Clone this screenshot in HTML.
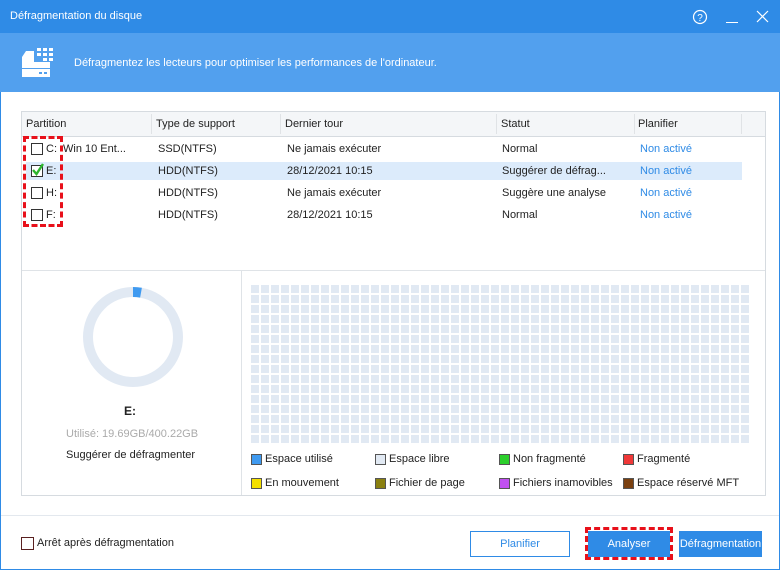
<!DOCTYPE html>
<html><head><meta charset="utf-8"><style>
*{margin:0;padding:0;box-sizing:border-box}
body{width:780px;height:570px;overflow:hidden;background:#fff;font-family:"Liberation Sans",sans-serif;font-size:11px;color:#222;position:relative}
.abs{position:absolute}
.win{position:absolute;left:0;top:0;width:780px;height:570px;border:1px solid #2f8be6;border-top:none}
.title{left:0;top:0;width:780px;height:33px;background:#2f8be6;color:#fff}
.band{left:0;top:33px;width:780px;height:59px;background:#52a0ee;color:#fff}
.tbl{left:21px;top:111px;width:745px;height:385px;border:1px solid #d6dbe0}
.hdr{left:22px;top:112px;width:743px;height:25px;background:#f4f6f8;border-bottom:1px solid #d6dbe0}
.cb{width:12px;height:12px;border:1px solid #333;background:#fff}
.link{color:#2f8be6}
.lg{width:11px;height:11px;border:1px solid #555}
.btn{height:26px;text-align:center;line-height:26px;font-size:11px}
</style></head><body>
<div class="win"></div>
<div class="abs title"><span class="abs" style="left:10px;top:10px">Défragmentation du disque</span>
<svg class="abs" style="left:692px;top:9px" width="16" height="16"><circle cx="8" cy="8" r="6.5" fill="none" stroke="#fff" stroke-width="1.2"/><text x="8" y="12" font-size="10" fill="#fff" text-anchor="middle" font-family="Liberation Sans">?</text></svg>
<div class="abs" style="left:726px;top:22px;width:12px;height:1px;background:#fff"></div>
<svg class="abs" style="left:756px;top:10px" width="13" height="13"><path d="M1 1L12 12M12 1L1 12" stroke="#fff" stroke-width="1.2"/></svg>
</div>
<div class="abs band">
<svg class="abs" style="left:21px;top:14px" width="34" height="32" fill="#fff">
<rect x="16" y="1" width="4" height="3"/><rect x="22" y="1" width="4" height="3"/><rect x="28" y="1" width="4" height="3"/>
<rect x="16" y="6" width="4" height="3"/><rect x="22" y="6" width="4" height="3"/><rect x="28" y="6" width="4" height="3"/>
<rect x="22" y="11" width="4" height="3"/><rect x="28" y="11" width="4" height="3"/>
<path d="M5 4H13V15H29V21H1V10Z"/><rect x="1" y="22" width="28" height="8"/><rect x="18" y="25" width="3" height="2" fill="#52a0ee"/><rect x="23" y="25" width="3" height="2" fill="#52a0ee"/>
</svg>
<span class="abs" style="left:74px;top:24px">Défragmentez les lecteurs pour optimiser les performances de l'ordinateur.</span></div>

<div class="abs tbl"></div>
<div class="abs hdr">
<span class="abs" style="left:4px;top:6px">Partition</span>
<span class="abs" style="left:134px;top:6px">Type de support</span>
<span class="abs" style="left:263px;top:6px">Dernier tour</span>
<span class="abs" style="left:479px;top:6px">Statut</span>
<span class="abs" style="left:616px;top:6px">Planifier</span>
<div class="abs" style="left:129px;top:2px;width:1px;height:20px;background:#e0e3e6"></div>
<div class="abs" style="left:258px;top:2px;width:1px;height:20px;background:#e0e3e6"></div>
<div class="abs" style="left:474px;top:2px;width:1px;height:20px;background:#e0e3e6"></div>
<div class="abs" style="left:612px;top:2px;width:1px;height:20px;background:#e0e3e6"></div>
<div class="abs" style="left:719px;top:2px;width:1px;height:20px;background:#e0e3e6"></div>
</div>
<div class="abs" style="left:26px;top:162px;width:716px;height:18px;background:#dcebfb"></div>
<div class="abs cb" style="left:31px;top:143px"></div><span class="abs" style="left:46px;top:143px">C:</span><span class="abs" style="left:63px;top:143px">Win 10 Ent...</span>
<div class="abs cb" style="left:31px;top:165px"></div><svg class="abs" style="left:31px;top:162px" width="14" height="14"><path d="M2 8L5.5 12L12 2" stroke="#2db52d" stroke-width="2.4" fill="none"/></svg><span class="abs" style="left:46px;top:165px">E:</span>
<div class="abs cb" style="left:31px;top:187px"></div><span class="abs" style="left:46px;top:187px">H:</span>
<div class="abs cb" style="left:31px;top:209px"></div><span class="abs" style="left:46px;top:209px">F:</span>
<span class="abs" style="left:158px;top:143px">SSD(NTFS)</span><span class="abs" style="left:287px;top:143px">Ne jamais exécuter</span><span class="abs" style="left:502px;top:143px">Normal</span><span class="abs link" style="left:640px;top:143px">Non activé</span>
<span class="abs" style="left:158px;top:165px">HDD(NTFS)</span><span class="abs" style="left:287px;top:165px">28/12/2021 10:15</span><span class="abs" style="left:502px;top:165px">Suggérer de défrag...</span><span class="abs link" style="left:640px;top:165px">Non activé</span>
<span class="abs" style="left:158px;top:187px">HDD(NTFS)</span><span class="abs" style="left:287px;top:187px">Ne jamais exécuter</span><span class="abs" style="left:502px;top:187px">Suggère une analyse</span><span class="abs link" style="left:640px;top:187px">Non activé</span>
<span class="abs" style="left:158px;top:209px">HDD(NTFS)</span><span class="abs" style="left:287px;top:209px">28/12/2021 10:15</span><span class="abs" style="left:502px;top:209px">Normal</span><span class="abs link" style="left:640px;top:209px">Non activé</span>
<div class="abs" style="left:23px;top:136px;width:40px;height:91px;border:3px dashed #e8101a"></div>

<div class="abs" style="left:22px;top:270px;width:743px;height:1px;background:#dfe3e7"></div>
<div class="abs" style="left:241px;top:270px;width:1px;height:225px;background:#dfe3e7"></div>
<svg class="abs" style="left:82px;top:286px" width="102" height="102"><circle cx="51" cy="51" r="45" fill="none" stroke="#e1e9f3" stroke-width="10"/><path d="M51 6A45 45 0 0 1 59 6.7" stroke="#3f9af0" stroke-width="10" fill="none"/></svg>
<span class="abs" style="left:124px;top:404px;font-weight:bold;font-size:12px">E:</span>
<span class="abs" style="left:66px;top:428px;color:#aaa">Utilisé: 19.69GB/400.22GB</span>
<span class="abs" style="left:66px;top:449px">Suggérer de défragmenter</span>
<div class="abs" style="left:251px;top:285px;width:500px;height:158px;background:repeating-linear-gradient(90deg,transparent 0 8px,#fff 8px 10px),repeating-linear-gradient(180deg,#e1e9f3 0 8px,#fff 8px 10px)"></div>
<div class="abs lg" style="left:251px;top:454px;background:#3f9af0"></div><span class="abs" style="left:265px;top:453px">Espace utilisé</span>
<div class="abs lg" style="left:375px;top:454px;background:#e1e9f3"></div><span class="abs" style="left:389px;top:453px">Espace libre</span>
<div class="abs lg" style="left:499px;top:454px;background:#2ccf2c"></div><span class="abs" style="left:513px;top:453px">Non fragmenté</span>
<div class="abs lg" style="left:623px;top:454px;background:#f03838"></div><span class="abs" style="left:637px;top:453px">Fragmenté</span>
<div class="abs lg" style="left:251px;top:478px;background:#f5e000"></div><span class="abs" style="left:265px;top:477px">En mouvement</span>
<div class="abs lg" style="left:375px;top:478px;background:#8a8010"></div><span class="abs" style="left:389px;top:477px">Fichier de page</span>
<div class="abs lg" style="left:499px;top:478px;background:#c050f0"></div><span class="abs" style="left:513px;top:477px">Fichiers inamovibles</span>
<div class="abs lg" style="left:623px;top:478px;background:#7a4010"></div><span class="abs" style="left:637px;top:477px">Espace réservé MFT</span>

<div class="abs" style="left:1px;top:515px;width:778px;height:1px;background:#e3e8ee"></div>
<div class="abs" style="left:21px;top:537px;width:13px;height:13px;border:1px solid #5a2020"></div>
<span class="abs" style="left:37px;top:537px">Arrêt après défragmentation</span>
<div class="abs btn" style="left:470px;top:531px;width:100px;border:1px solid #2f8be6;color:#2f8be6;line-height:24px">Planifier</div>
<div class="abs btn" style="left:588px;top:531px;width:82px;background:#2f8be6;color:#fff">Analyser</div>
<div class="abs" style="left:585px;top:527px;width:88px;height:33px;border:3px dashed #e8101a"></div>
<div class="abs btn" style="left:679px;top:531px;width:83px;background:#2f8be6;color:#fff;white-space:nowrap;overflow:hidden">Défragmentation</div>
</body></html>
